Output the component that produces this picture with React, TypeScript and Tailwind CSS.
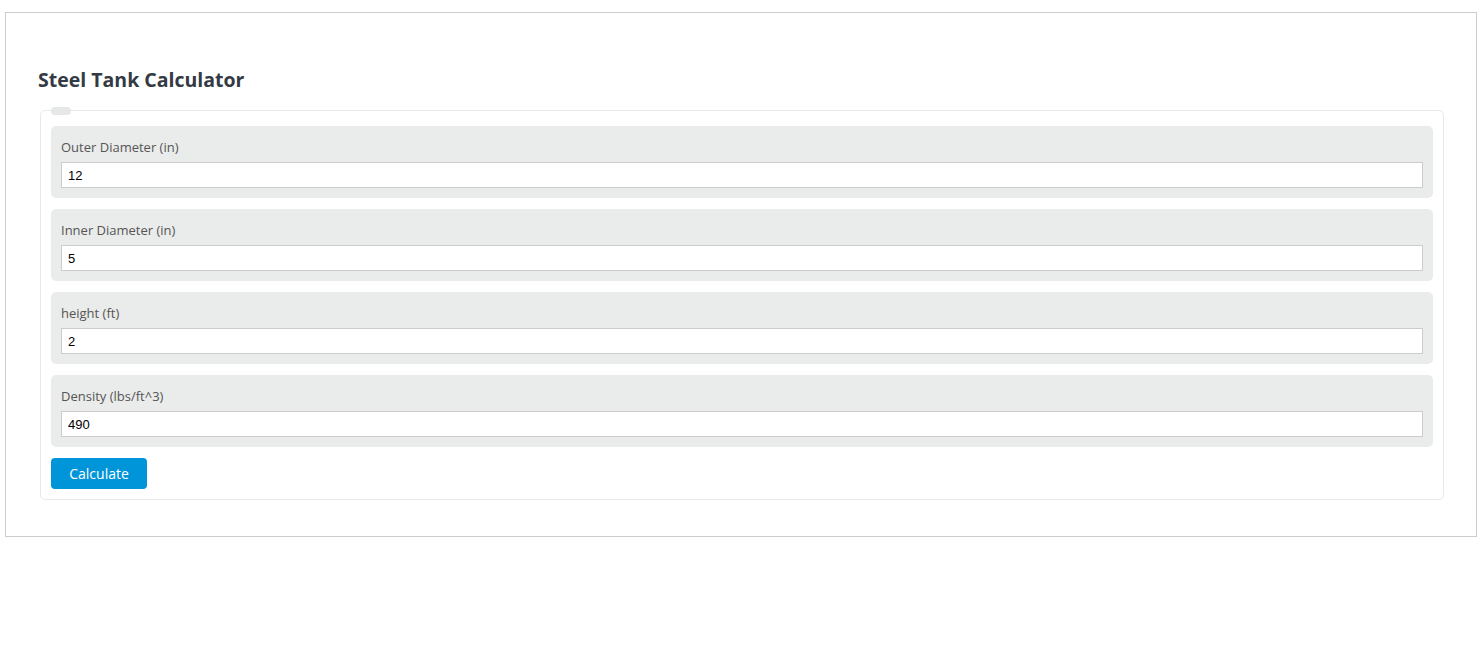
import { useState } from 'react'

interface Field {
    label: string
    value: string
}

const fields: Field[] = [
    { label: 'Outer Diameter (in)', value: '12' },
    { label: 'Inner Diameter (in)', value: '5' },
    { label: 'height (ft)', value: '2' },
    { label: 'Density (lbs/ft^3)', value: '490' },
]

export default function App() {
    const [values, setValues] = useState(fields.map((f) => f.value))

    return (
        <div className="min-h-screen bg-white pt-[12px] pl-[5px] pr-[5px] font-['Open_Sans',sans-serif]">
            <div className="border border-[#cccccc] pl-[34px] pr-[32px] pt-[55px] pb-[36px]">
                <h2 className="text-[19.5px] leading-[24px] font-bold text-[#333a44] ml-[-2px] mb-[18px]">
                    Steel Tank Calculator
                </h2>
                <div className="relative border border-[#e8e8e8] rounded-[5px] px-[10px] pt-[15px] pb-[10px]">
                    <span className="absolute -top-[4px] left-[10px] w-[20px] h-[8px] rounded-full bg-[#e6e7e7]" />
                    <div className="flex flex-col gap-[11px]">
                        {fields.map((f, i) => (
                            <div key={f.label} className="bg-[#eaebeb] rounded-[5px] px-[10px] pt-[11px] pb-[10px]">
                                <label className="block text-[13px] leading-[20px] text-[#555555] mb-[5px]">{f.label}</label>
                                <input
                                    className="block w-full h-[26px] bg-white border border-[#cccccc] px-[6px] text-[13px] text-black font-['Liberation_Sans',Arial,sans-serif] outline-none"
                                    value={values[i]}
                                    onChange={(e) => {
                                        const next = [...values]
                                        next[i] = e.target.value
                                        setValues(next)
                                    }}
                                />
                            </div>
                        ))}
                        <div>
                            <button className="w-[96px] h-[31px] rounded-[4px] bg-[#0095d9] text-white text-[14px]">
                                Calculate
                            </button>
                        </div>
                    </div>
                </div>
            </div>
        </div>
    )
}
